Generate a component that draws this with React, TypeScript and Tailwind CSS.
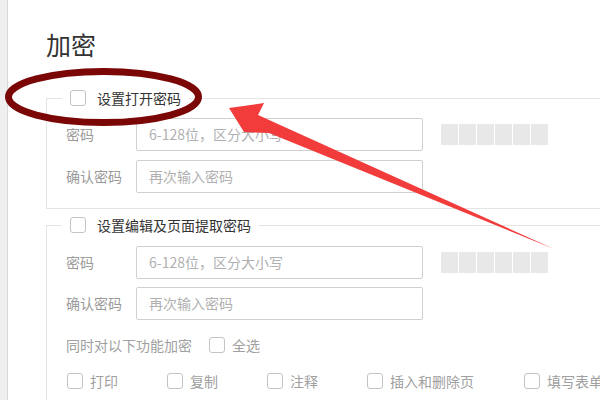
import React from "react";

const font = { fontFamily: '"Noto Sans CJK SC", "Noto Sans", sans-serif' };

function Box({ className = "" }: { className?: string }) {
  return <div className={`h-[16px] w-[16px] shrink-0 rounded-[3px] border border-[#c4c4c4] bg-white ${className}`} />;
}

function Strength() {
  return (
    <div className="ml-[18px] flex gap-[1px]">
      {[0, 1, 2, 3, 4, 5].map((i) => (
        <div key={i} className="h-[21px] w-[17px] bg-[#e8e8e8]" />
      ))}
    </div>
  );
}

function Row({ label, ph, strength }: { label: string; ph: string; strength?: boolean }) {
  return (
    <div className="flex items-center">
      <div className="w-[70px] shrink-0 text-[14px] text-[#9a9a9a]">{label}</div>
      <div className="flex h-[33px] w-[287px] shrink-0 items-center rounded-[2px] border border-[#d0d0d0] pl-[12px] text-[14px] text-[#b0b0b0]">
        {ph}
      </div>
      {strength && <Strength />}
    </div>
  );
}

function Legend({ text }: { text: string }) {
  return (
    <legend className="-ml-[4px] px-[8px]">
      <div className="flex h-[20px] items-center gap-[11px]">
        <Box />
        <span className="text-[14px] leading-[20px] text-[#333]">{text}</span>
      </div>
    </legend>
  );
}

function Opt({ text, w }: { text: string; w: string }) {
  return (
    <div className={`flex shrink-0 items-center gap-[7px] ${w}`}>
      <Box />
      <span className="whitespace-nowrap text-[14px] text-[#a0a0a0]">{text}</span>
    </div>
  );
}

export default function App() {
  return (
    <div className="relative flex h-[400px] w-[600px] overflow-hidden bg-white" style={font}>
      <div className="h-full w-[8px] shrink-0 border-r border-[#dadada] bg-[#efefef]" />
      <div className="min-w-0 flex-1 pl-[38px] pt-[28px]">
        <div className="text-[25px] leading-[32px] text-[#333]">加密</div>
        <fieldset className="mt-[28px] w-[620px] border border-[#e4e4e4] pb-[15px] pl-[19px]">
          <Legend text="设置打开密码" />
          <div className="mt-[10px] flex flex-col gap-[9px]">
            <Row label="密码" ph="6-128位，区分大小写" strength />
            <Row label="确认密码" ph="再次输入密码" />
          </div>
        </fieldset>
        <fieldset className="mt-[6px] w-[620px] border border-[#e4e4e4] pb-[20px] pl-[19px]">
          <Legend text="设置编辑及页面提取密码" />
          <div className="mt-[11px] flex flex-col gap-[8px]">
            <Row label="密码" ph="6-128位，区分大小写" strength />
            <Row label="确认密码" ph="再次输入密码" />
          </div>
          <div className="mt-[15px] flex h-[20px] items-center">
            <span className="text-[14px] text-[#a0a0a0]">同时对以下功能加密</span>
            <div className="ml-[17px] flex items-center gap-[7px]">
              <Box />
              <span className="text-[14px] text-[#a0a0a0]">全选</span>
            </div>
          </div>
          <div className="mt-[16px] flex h-[20px] items-center pl-[1px]">
            <Opt text="打印" w="w-[100px]" />
            <Opt text="复制" w="w-[100px]" />
            <Opt text="注释" w="w-[100px]" />
            <Opt text="插入和删除页" w="w-[157px]" />
            <Opt text="填写表单" w="w-[120px]" />
          </div>
        </fieldset>
      </div>
      <svg className="pointer-events-none absolute left-0 top-0" width="600" height="400" viewBox="0 0 600 400">
        <ellipse cx="103.5" cy="97" rx="95" ry="25.5" fill="none" stroke="#7a0606" strokeWidth="7" />
        <polygon points="229,108 264,103 258,115 554,249 269,133 244,132" fill="#f23b3b" />
      </svg>
    </div>
  );
}
